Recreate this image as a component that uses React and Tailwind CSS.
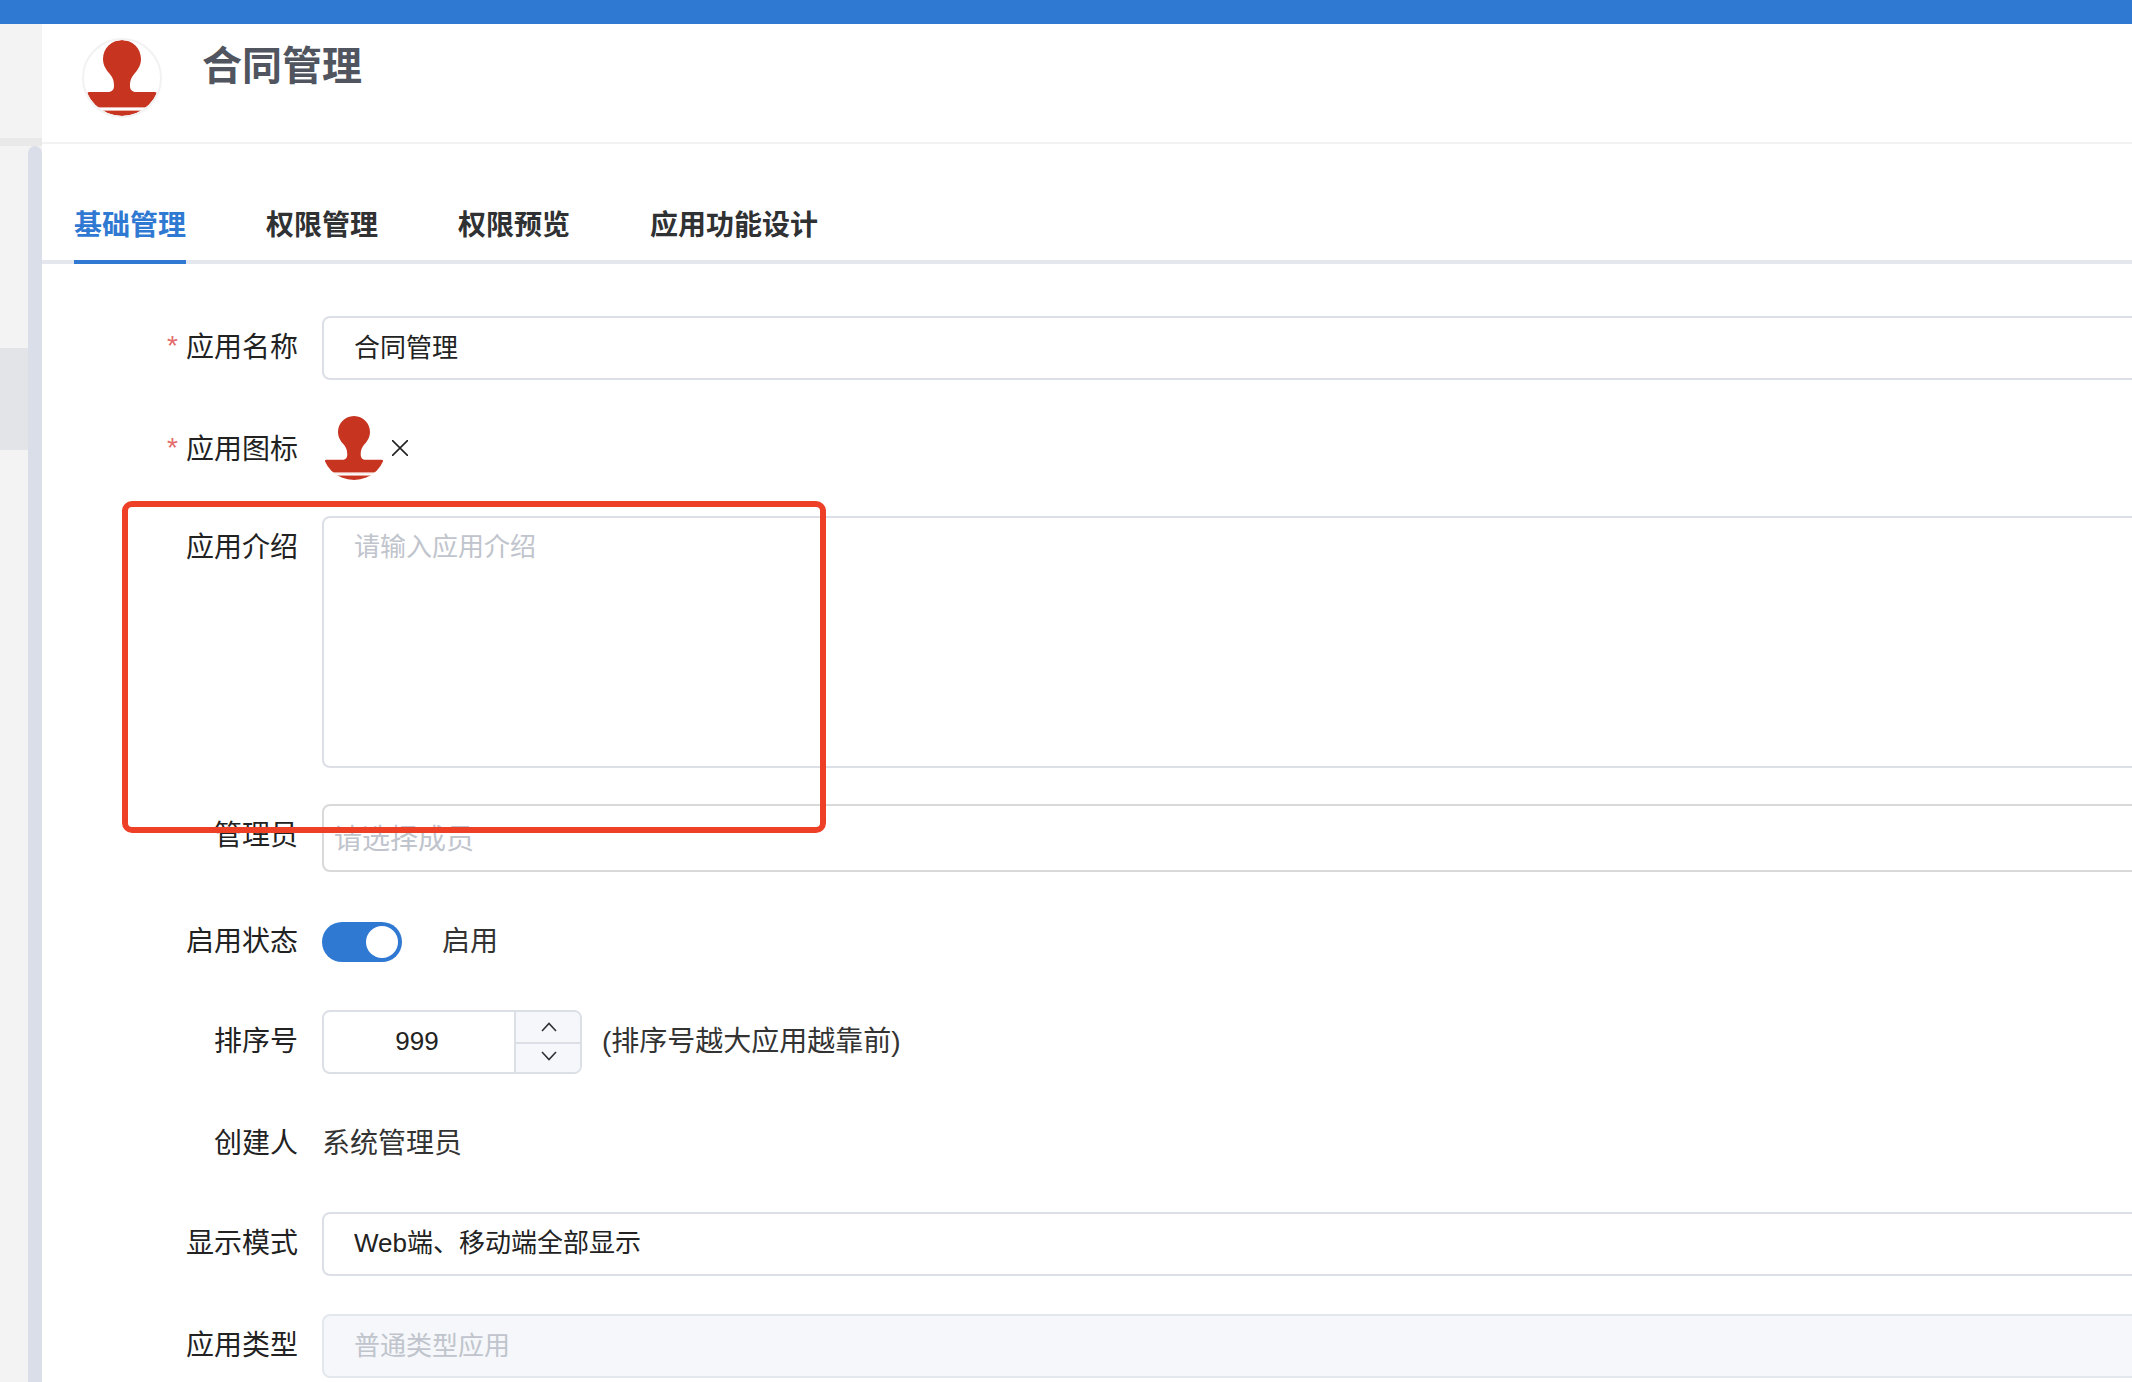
import { useId, useState } from "react";

function StampIcon({ className }) {
  const clip = useId();
  return (
    <svg viewBox="2 2 76 76" className={className} aria-hidden="true">
      <clipPath id={clip}>
        <circle cx="40" cy="40" r="38" />
      </clipPath>
      <g clipPath={`url(#${clip})`} fill="#c73521">
        <path d="M40 2C29.500 2 21 10.500 21 21C21 27 24 31.500 27 35C31 39.500 32 42.500 32 48C32 51.500 30 54 26 54H7Q5 54 5.500 56L2 69H78L74.500 56Q75 54 73 54H54C50 54 48 51.500 48 48C48 42.500 49 39.500 53 35C56 31.500 59 27 59 21C59 10.500 50.500 2 40 2Z" />
        <rect x="2" y="69" width="76" height="1" fill="#e9b0a7" />
        <rect x="2" y="72" width="76" height="1" fill="#e9b0a7" />
        <rect x="2" y="73" width="76" height="6" />
      </g>
    </svg>
  );
}

function Chevron({ up }) {
  return (
    <svg viewBox="0 0 16 10" className="h-2.5 w-4" fill="none" stroke="#303133" strokeWidth="1.6" aria-hidden="true">
      <path d={up ? "M1 9L8 1.500L15 9" : "M1 1L8 8.500L15 1"} />
    </svg>
  );
}

function Row({ label, htmlFor, required, className = "min-h-[66px]", children }) {
  return (
    <div className={`relative flex items-start gap-6 ${className}`}>
      <label htmlFor={htmlFor} className="flex w-[224px] shrink-0 justify-end gap-2 text-[28px] leading-[64px] text-[#222222]">
        {required && <span className="leading-[60px] text-[#e46c6c]">*</span>}
        {label}
      </label>
      {children}
    </div>
  );
}

const tabs = ["基础管理", "权限管理", "权限预览", "应用功能设计"];
const field = "min-w-0 flex-1 appearance-none rounded-lg border-2 border-[#dcdfe6] bg-white px-[30px] text-[26px] text-[#222222] outline-none placeholder:text-[#c0c4cc]";

export default function App() {
  const [tab, setTab] = useState(0);
  const [enabled, setEnabled] = useState(true);
  const [order, setOrder] = useState(999);

  return (
    <div className="flex min-h-screen flex-col overflow-x-clip bg-white font-['Liberation_Sans','Noto_Sans_CJK_SC',sans-serif]">
      <div className="h-6 bg-[#3079d2]" />
      <div className="flex flex-1">
        <aside className="flex w-[42px] shrink-0 flex-col bg-[#f3f3f3]">
          <div className="h-[114px]" />
          <div className="h-2 bg-[#e9e9e9]" />
          <div className="flex flex-1">
            <div className="flex-1 pt-[202px]">
              <div className="h-[102px] bg-[#e2e4e8]" />
            </div>
            <div className="w-3.5 rounded-t-full bg-[#d9dee8]" />
          </div>
        </aside>

        <main className="min-w-0 flex-1">
          <header className="flex h-[120px] items-start gap-10 border-b-2 border-[#f2f2f2] pt-3.5 pl-10">
            <div className="size-20 overflow-hidden rounded-full border-2 border-[#f2f2f3]">
              <StampIcon className="size-full" />
            </div>
            <h1 className="text-[40px] leading-[56px] font-bold text-[#50555f]">合同管理</h1>
          </header>

          <nav className="flex h-[120px] items-end gap-20 border-b-4 border-[#e4e7ed] pl-8" role="tablist">
            {tabs.map((t, i) => (
              <button
                key={t}
                type="button"
                role="tab"
                aria-selected={tab === i}
                onClick={() => setTab(i)}
                className={`-mb-1 h-20 border-b-4 pt-2 text-[28px] font-semibold ${tab === i ? "border-[#3079d2] text-[#3079d2]" : "border-transparent text-[#303133]"}`}
              >
                {t}
              </button>
            ))}
          </nav>

          <form className="-mr-10 flex flex-col gap-9 pt-[52px] pl-8">
            <Row label="应用名称" htmlFor="name" required>
              <input id="name" className={`${field} h-16 pb-1.5`} defaultValue="合同管理" />
            </Row>

            <Row label="应用图标" htmlFor="icon" required className="h-[62px]">
              <div className="-mt-0.5 flex items-center gap-1.5">
                <StampIcon className="size-16" />
                <button id="icon" type="button" aria-label="移除图标" className="flex h-16 items-center">
                  <svg viewBox="0 0 16 16" className="size-4" stroke="#222222" strokeWidth="1.6" aria-hidden="true">
                    <path d="M0 0L16 16M16 0L0 16" />
                  </svg>
                </button>
              </div>
            </Row>

            <Row label="应用介绍" htmlFor="intro" className="">
              <textarea id="intro" className={`${field} block h-[252px] resize-none py-2 leading-[42px]`} placeholder="请输入应用介绍" />
              <div className="pointer-events-none absolute -top-[15px] left-12 z-10 h-[332px] w-[704px] rounded-[10px] border-6 border-[#ee4026]" />
            </Row>

            <Row label="管理员" htmlFor="admin" className="min-h-[70px]">
              <input
                id="admin"
                className="h-[68px] min-w-0 flex-1 rounded-lg border-2 border-[#d9d9d9] px-2.5 pt-1 text-[28px] outline-none placeholder:text-[#c0c4cc]"
                placeholder="请选择成员"
              />
            </Row>

            <Row label="启用状态" htmlFor="enabled" className="h-16">
              <div className="flex h-16 items-center gap-10">
                <input
                  id="enabled"
                  type="checkbox"
                  role="switch"
                  checked={enabled}
                  onChange={(e) => setEnabled(e.target.checked)}
                  className="flex h-10 w-20 appearance-none items-center rounded-full bg-[#c0c4cc] px-1 before:size-8 before:rounded-full before:bg-white checked:justify-end checked:bg-[#3079d2]"
                />
                <span className="text-[28px] leading-[64px] text-[#333333]">{enabled ? "启用" : "停用"}</span>
              </div>
            </Row>

            <Row label="排序号" htmlFor="order">
              <div className="flex gap-5">
                <div className="flex h-16 w-[260px] overflow-hidden rounded-lg border-2 border-[#dcdfe6]">
                  <input
                    id="order"
                    inputMode="numeric"
                    value={order}
                    onChange={(e) => setOrder(Number(e.target.value) || 0)}
                    className="min-w-0 flex-1 pr-1 pb-0.5 text-center text-[26px] text-[#222222] outline-none"
                  />
                  <div className="flex w-[66px] flex-col border-l-2 border-[#dcdfe6] bg-[#f5f7fa]">
                    <button type="button" aria-label="增加" onClick={() => setOrder(order + 1)} className="flex flex-1 items-center justify-center border-b-2 border-[#dcdfe6] pl-0.5">
                      <Chevron up />
                    </button>
                    <button type="button" aria-label="减少" onClick={() => setOrder(order - 1)} className="flex h-7 items-center justify-center pb-1 pl-0.5">
                      <Chevron />
                    </button>
                  </div>
                </div>
                <span className="text-[28px] leading-[64px] text-[#333333]">(排序号越大应用越靠前)</span>
              </div>
            </Row>

            <Row label="创建人" htmlFor="creator" className="h-16">
              <output id="creator" className="text-[28px] leading-[64px] text-[#333333]">系统管理员</output>
            </Row>

            <Row label="显示模式" htmlFor="mode">
              <select id="mode" className={`${field} h-16 pb-0.5`}>
                <option>Web端、移动端全部显示</option>
              </select>
            </Row>

            <Row label="应用类型" htmlFor="type">
              <input
                id="type"
                disabled
                defaultValue="普通类型应用"
                className="h-16 min-w-0 flex-1 rounded-lg border-2 border-[#e4e7ed] bg-[#f5f7fa] px-[30px] pb-1.5 text-[26px] text-[#c0c4cc]"
              />
            </Row>
          </form>
        </main>
      </div>
    </div>
  );
}
